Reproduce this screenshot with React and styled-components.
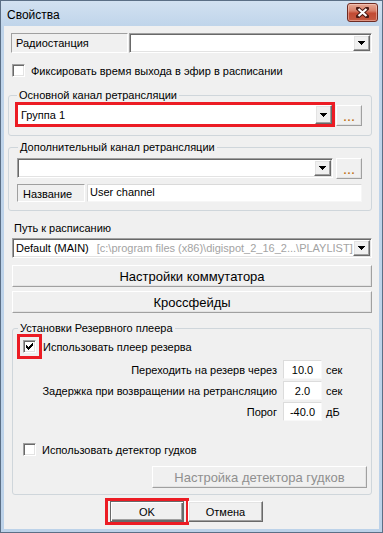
import React from "react";
import styled, { createGlobalStyle, css } from "styled-components";

const Global = createGlobalStyle`
  html, body { margin: 0; padding: 0; }
  body {
    background: #bfd4ea;
    font-family: "Liberation Sans", Arial, sans-serif;
    font-size: 11px;
    color: #000;
  }
  * { box-sizing: border-box; }
`;

const sunken = css`
  border: 1px solid;
  border-color: #a0a0a0 #ffffff #ffffff #a0a0a0;
  box-shadow: inset 1px 1px 0 #696969, inset -1px -1px 0 #e3e3e3;
`;

const raised = css`
  border: 1px solid;
  border-color: #ffffff #696969 #696969 #ffffff;
  box-shadow: inset -1px -1px 0 #a0a0a0, inset 1px 1px 0 #e3e3e3;
`;

const Window = styled.div`
  width: 383px;
  height: 533px;
  border: 1px solid #5b6f86;
  background: linear-gradient(to bottom, #d2e1f1 0px, #bfd4ea 26px, #bcd2e9 100%);
  padding: 0 3px 3px 3px;
  display: flex;
  flex-direction: column;
`;

const TitleBar = styled.div`
  height: 25px;
  flex: none;
  display: flex;
  align-items: flex-start;
  justify-content: space-between;
  padding-left: 3px;
`;

const TitleText = styled.span`
  font-size: 12px;
  line-height: 14px;
  margin-top: 7px;
`;

const CloseButton = styled.div`
  width: 31px;
  height: 19px;
  margin-top: 2px;
  margin-right: 1px;
  border: 1px solid #6e2b22;
  border-radius: 3px;
  background: linear-gradient(to bottom, #e6a996 0%, #d8806a 40%, #c24a33 55%, #c65a42 100%);
  box-shadow: inset 0 0 0 1px rgba(255, 220, 210, 0.45);
  display: flex;
  align-items: center;
  justify-content: center;
`;

const Client = styled.div`
  flex: 1;
  background: #f0f0f0;
  padding: 7px 7px 0 7px;
  display: flex;
  flex-direction: column;
`;

const Row = styled.div`
  display: flex;
  align-items: ${(p) => p.$align || "center"};
  gap: ${(p) => p.$gap || 0}px;
  margin-top: ${(p) => p.$mt || 0}px;
  margin-left: ${(p) => p.$ml || 0}px;
  height: ${(p) => (p.$h ? `${p.$h}px` : "auto")};
  flex: none;
`;

const LabelBox = styled.div`
  width: ${(p) => p.$w}px;
  height: 100%;
  flex: none;
  border: 1px solid;
  border-color: #a0a0a0 #ffffff #ffffff #a0a0a0;
  background: #f0f0f0;
  padding-left: ${(p) => p.$pl || 4}px;
  padding-top: ${(p) => p.$pt || 0}px;
  display: flex;
  align-items: center;
  white-space: nowrap;
`;

const Combo = styled.div`
  ${(p) => (p.$bare ? "border: none;" : sunken)}
  background: #fff;
  height: ${(p) => p.$h || 20}px;
  width: ${(p) => (p.$w ? `${p.$w}px` : "auto")};
  flex: ${(p) => (p.$w ? "none" : "1")};
  margin-left: ${(p) => p.$ml || 0}px;
  padding: ${(p) => (p.$bare ? 0 : 1)}px;
  display: flex;
  align-items: stretch;
`;

const ComboText = styled.div`
  flex: 1;
  min-width: 0;
  display: flex;
  align-items: center;
  padding-left: ${(p) => p.$pl || 2}px;
  white-space: nowrap;
  overflow: hidden;
`;

const Muted = styled.span`
  color: #a3a3a3;
  margin-left: 8px;
`;

const ArrowButton = styled.div`
  width: 17px;
  flex: none;
  background: #f0f0f0;
  ${raised}
  display: flex;
  align-items: center;
  justify-content: center;
`;

const Arrow = () => (
  <ArrowButton>
    <svg width="7" height="4" viewBox="0 0 7 4" shapeRendering="crispEdges">
      <rect x="0" y="0" width="7" height="1" fill="#000" />
      <rect x="1" y="1" width="5" height="1" fill="#000" />
      <rect x="2" y="2" width="3" height="1" fill="#000" />
      <rect x="3" y="3" width="1" height="1" fill="#000" />
    </svg>
  </ArrowButton>
);

const CheckBox = styled.span`
  width: 13px;
  height: 13px;
  flex: none;
  background: #fff;
  ${sunken}
  display: inline-flex;
  align-items: center;
  justify-content: center;
  margin-left: ${(p) => p.$ml || 0}px;
`;

const CheckLabel = styled.span`
  margin-left: ${(p) => p.$gap || 6}px;
  white-space: nowrap;
`;

const GroupBox = styled.fieldset`
  margin: ${(p) => p.$mt || 0}px 0 0 ${(p) => p.$ml || 0}px;
  padding: ${(p) => p.$pt || 0}px ${(p) => p.$pr || 0}px ${(p) => p.$pb || 0}px
    ${(p) => p.$pl || 0}px;
  border: 1px solid #cfd6db;
  border-radius: 3px;
  min-width: 0;
  display: flex;
  flex-direction: column;
  flex: none;
`;

const Legend = styled.legend`
  padding: 0 2px;
  margin-left: ${(p) => p.$ml || 0}px;
  line-height: 14px;
  font-size: 11px;
`;

const RedFrame = styled.div`
  border: 3px solid #ec1c24;
  display: flex;
  align-items: center;
  justify-content: ${(p) => p.$justify || "stretch"};
  width: ${(p) => p.$w}px;
  height: ${(p) => p.$h}px;
  padding: ${(p) => p.$pad || "0"};
  flex: none;
`;

const DotsButton = styled.div`
  width: 26px;
  height: 21px;
  flex: none;
  margin-left: ${(p) => p.$ml || 0}px;
  margin-top: ${(p) => p.$mt || 0}px;
  background: #f0f0f0;
  border: 1px solid;
  border-color: #ffffff #a0a0a0 #a0a0a0 #ffffff;
  box-shadow: inset -1px -1px 0 #e3e3e3;
  color: #c0731a;
  font-weight: bold;
  letter-spacing: 1px;
  display: flex;
  align-items: center;
  justify-content: center;
  padding-left: 1px;
  padding-top: 3px;
`;

const TextBox = styled.div`
  flex: 1;
  height: 100%;
  background: #fff;
  border: 1px solid;
  border-color: #dadada #f6f6f6 #f6f6f6 #dadada;
  padding: 1px 0 0 2px;
  line-height: 13px;
  white-space: nowrap;
`;

const PlainLabel = styled.div`
  margin-top: ${(p) => p.$mt || 0}px;
  padding-left: ${(p) => p.$pl || 0}px;
  line-height: 13px;
  flex: none;
`;

const PushButton = styled.div`
  height: ${(p) => p.$h || 22}px;
  width: ${(p) => (p.$w ? `${p.$w}px` : "auto")};
  margin-top: ${(p) => p.$mt || 0}px;
  margin-left: ${(p) => p.$ml || 0}px;
  align-self: ${(p) => p.$self || "stretch"};
  flex: none;
  background: #f0f0f0;
  border: 1px solid;
  border-color: #ffffff #a0a0a0 #a0a0a0 #ffffff;
  box-shadow: inset -1px -1px 0 #e3e3e3;
  font-size: ${(p) => p.$fs || 11}px;
  color: ${(p) => (p.$disabled ? "#8f8f8f" : "#000")};
  display: flex;
  align-items: center;
  justify-content: center;
  white-space: nowrap;
`;

const DialogButton = styled.div`
  width: ${(p) => p.$w}px;
  height: 21px;
  flex: none;
  margin-left: ${(p) => p.$ml || 0}px;
  background: #f0f0f0;
  border: 1px solid;
  border-color: ${(p) =>
    p.$default ? "#696969" : "#ffffff #696969 #696969 #ffffff"};
  box-shadow: ${(p) =>
    p.$default
      ? "inset 1px 1px 0 #ffffff, inset -1px -1px 0 #696969, inset -2px -2px 0 #a0a0a0"
      : "inset -1px -1px 0 #a0a0a0, inset 1px 1px 0 #e3e3e3"};
  display: flex;
  align-items: center;
  justify-content: center;
`;

const FieldGrid = styled.div`
  display: grid;
  grid-template-columns: 260px 39px auto;
  grid-auto-rows: 19px;
  column-gap: 6px;
  row-gap: 2px;
  margin-top: ${(p) => p.$mt || 0}px;
  align-items: center;
  flex: none;
`;

const FieldLabel = styled.div`
  text-align: right;
  white-space: nowrap;
`;

const FieldInput = styled.div`
  height: 19px;
  background: #fff;
  border: 1px solid;
  border-color: #dcdcdc #f8f8f8 #f8f8f8 #dcdcdc;
  display: flex;
  align-items: center;
  justify-content: center;
`;

const Unit = styled.div`
  margin-left: -2px;
`;

const CheckMark = () => (
  <svg width="7" height="7" viewBox="0 0 7 7" shapeRendering="crispEdges">
    <path
      fill="#000"
      d="M6 0h1v3h-1v1h-1v1h-1v1h-1v1h-1v-1h-1v-1h-1v-3h1v1h1v1h1v-1h1v-1h1v-1h1z"
    />
  </svg>
);

const fields = [
  { label: "Переходить на резерв через", value: "10.0", unit: "сек" },
  { label: "Задержка при возвращении на ретрансляцию", value: "2.0", unit: "сек" },
  { label: "Порог", value: "-40.0", unit: "дБ" },
];

export default function App() {
  return (
    <>
      <Global />
      <Window>
        <TitleBar>
          <TitleText>Свойства</TitleText>
          <CloseButton>
            <svg width="13" height="11" viewBox="0 0 13 11">
              <path d="M2 1.5L11 9.5M11 1.5L2 9.5" stroke="#4a1a14" strokeWidth="4" strokeLinecap="square" />
              <path d="M2.5 2L10.5 9M10.5 2L2.5 9" stroke="#ffffff" strokeWidth="2.2" />
            </svg>
          </CloseButton>
        </TitleBar>
        <Client>
          <Row $h={20} $gap={1}>
            <LabelBox $w={117} $pl={4}>Радиостанция</LabelBox>
            <Combo $h={20}>
              <ComboText />
              <Arrow />
            </Combo>
          </Row>

          <Row $h={13} $mt={11}>
            <CheckBox $ml={1} />
            <CheckLabel $gap={6}>Фиксировать время выхода в эфир в расписании</CheckLabel>
          </Row>

          <GroupBox $mt={11} $ml={-3} $pl={6} $pr={9} $pb={8}>
            <Legend $ml={2}>Основной канал ретрансляции</Legend>
            <Row $align="flex-start">
              <RedFrame $w={320} $h={25}>
                <Combo $bare $h={19}>
                  <ComboText $pl={3}>Группа 1</ComboText>
                  <Arrow />
                </Combo>
              </RedFrame>
              <DotsButton $ml={1} $mt={3}>...</DotsButton>
            </Row>
          </GroupBox>

          <GroupBox $mt={4} $ml={-3} $pl={8} $pr={9} $pt={4} $pb={8}>
            <Legend $ml={1}>Дополнительный канал ретрансляции</Legend>
            <Row $align="flex-start">
              <Combo $w={316} $h={20}>
                <ComboText />
                <Arrow />
              </Combo>
              <DotsButton $ml={3}>...</DotsButton>
            </Row>
            <Row $h={18} $mt={5} $gap={2}>
              <LabelBox $w={68} $pl={5} $pt={2}>Название</LabelBox>
              <TextBox>User channel</TextBox>
            </Row>
          </GroupBox>

          <PlainLabel $mt={11} $pl={3}>Путь к расписанию</PlainLabel>
          <Row $mt={3} $ml={1} $h={20}>
            <Combo $h={20}>
              <ComboText $pl={2}>
                Default (MAIN)
                <Muted>[c:\program files (x86)\digispot_2_16_2...\PLAYLIST]</Muted>
              </ComboText>
              <Arrow />
            </Combo>
          </Row>

          <PushButton $mt={7} $ml={1} $h={22} $fs={13}>Настройки коммутатора</PushButton>
          <PushButton $mt={4} $ml={1} $h={22} $fs={13}>Кроссфейды</PushButton>

          <GroupBox $mt={8} $ml={1} $pl={4} $pr={4} $pb={6}>
            <Legend $ml={1}>Установки Резервного плеера</Legend>
            <Row $mt={-1} $h={25}>
              <RedFrame $w={25} $h={25} $justify="center">
                <CheckBox>
                  <CheckMark />
                </CheckBox>
              </RedFrame>
              <CheckLabel $gap={1}>Использовать плеер резерва</CheckLabel>
            </Row>
            <FieldGrid $mt={1}>
              {fields.map((f) => (
                <React.Fragment key={f.label}>
                  <FieldLabel>{f.label}</FieldLabel>
                  <FieldInput>{f.value}</FieldInput>
                  <Unit>{f.unit}</Unit>
                </React.Fragment>
              ))}
            </FieldGrid>
            <Row $h={13} $mt={22}>
              <CheckBox $ml={6} />
              <CheckLabel $gap={6}>Использовать детектор гудков</CheckLabel>
            </Row>
            <PushButton $mt={10} $h={22} $w={215} $self="flex-end" $fs={13} $disabled>
              Настройка детектора гудков
            </PushButton>
          </GroupBox>

          <Row $mt={3} $ml={94}>
            <RedFrame $w={84} $h={27} $pad="0 2px">
              <DialogButton $w={74} $default>OK</DialogButton>
            </RedFrame>
            <DialogButton $w={75} $ml={-1}>Отмена</DialogButton>
          </Row>
        </Client>
      </Window>
    </>
  );
}
